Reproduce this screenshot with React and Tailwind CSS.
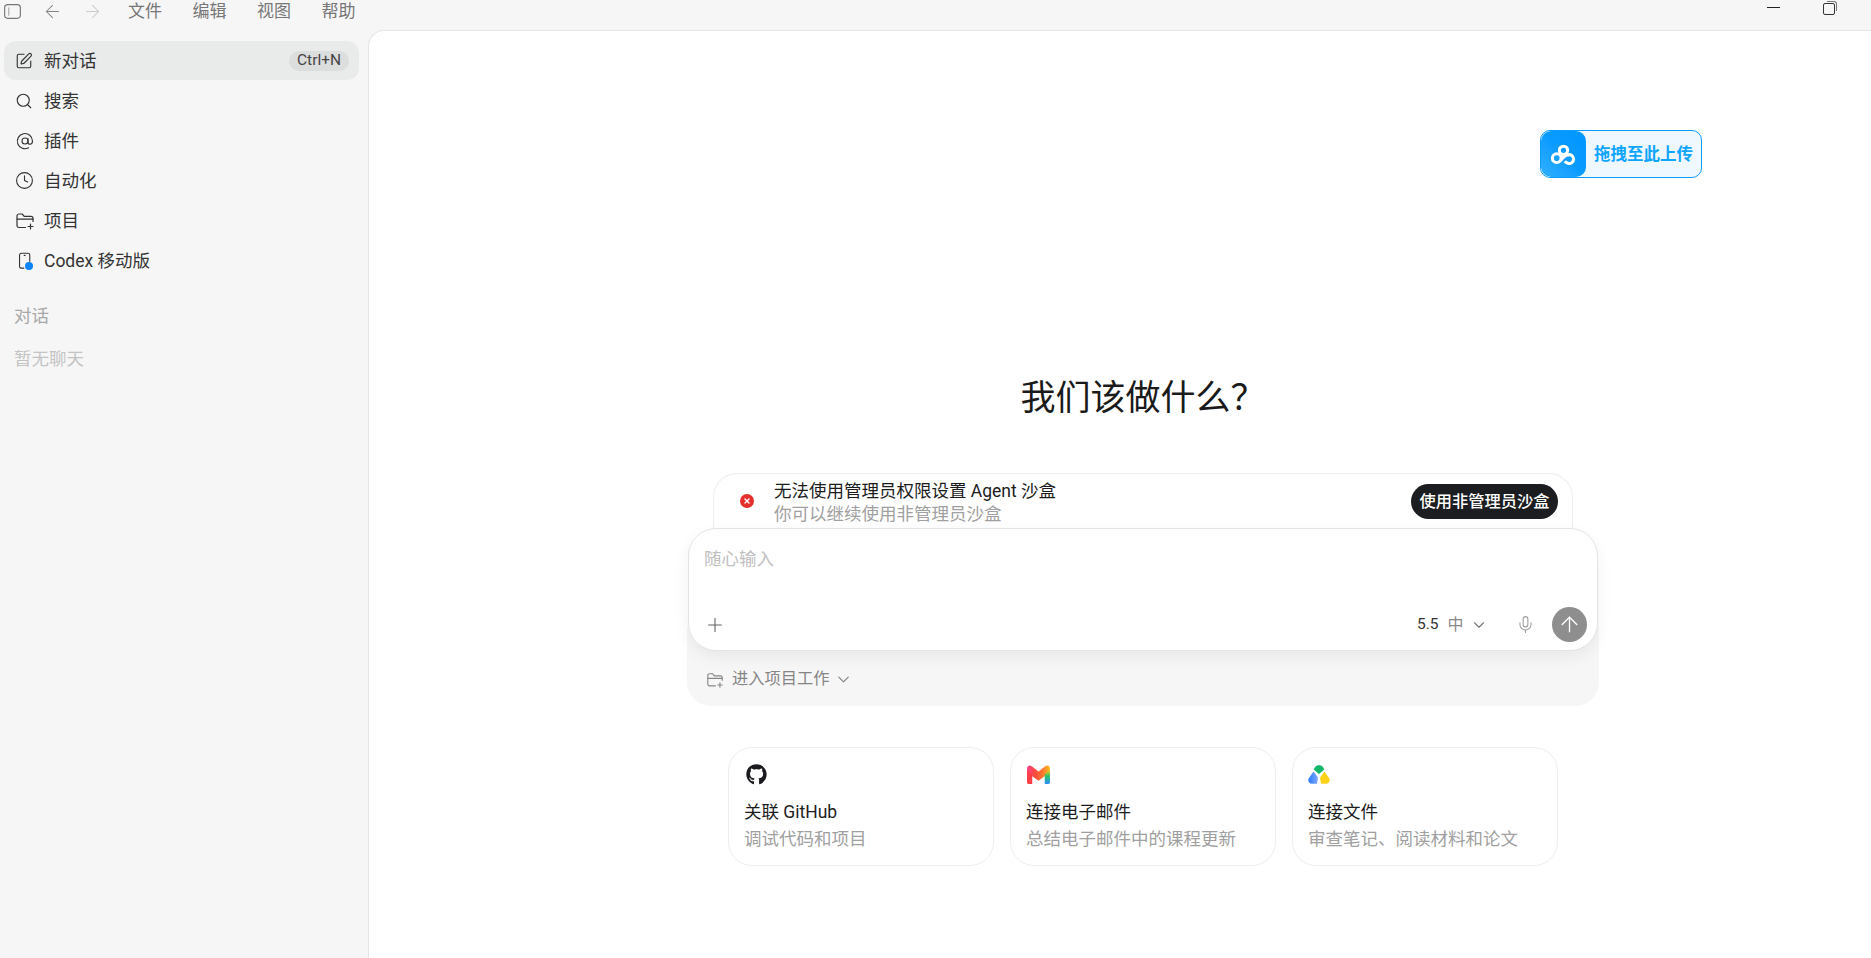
import { ArrowLeft, ArrowRight, ArrowUp, ChevronDown, Clock, Mic, Plus, Search, SquarePen, X } from 'lucide-react';
import { FaGithub } from 'react-icons/fa';

const FolderAdd = ({ className }) => (
  <svg viewBox="0 0 20 20" fill="none" stroke="currentColor" strokeWidth="1.2" strokeLinecap="round" strokeLinejoin="round" className={className}>
    <path d="M10.5 16.5H4a2 2 0 0 1-2-2V5a2 2 0 0 1 2-2h3.2l2 2.4H16a2 2 0 0 1 2 2v3" />
    <path d="M2.2 8.2H18" />
    <path d="M15.5 13v5M13 15.5h5" />
  </svg>
);

const At = ({ className }) => (
  <svg viewBox="0 0 20 20" fill="none" stroke="currentColor" strokeWidth="1.1" strokeLinecap="round" className={className}>
    <circle cx="10" cy="10" r="3" />
    <path d="M13 7.4v3.800c0 1.200.9 2 2 2s2.500-1 2.500-3.200A7.600 7.600 0 1 0 13.600 16.800" />
  </svg>
);

const PhoneDot = ({ className }) => (
  <span className={`relative block ${className}`}>
    <svg viewBox="0 0 20 20" fill="none" stroke="currentColor" strokeWidth="1.3" strokeLinecap="round" className="w-full h-full">
      <path d="M8 19H5a2 2 0 0 1-2-2V3.500a2 2 0 0 1 2-2h8a2 2 0 0 1 2 2V11" />
      <path d="M8.500 4h1" />
    </svg>
    <span className="absolute right-[1px] bottom-[-1px] w-[8px] h-[8px] rounded-full bg-[#0a84ff]" />
  </span>
);

const Gmail = () => (
  <svg viewBox="0 0 24 20" className="w-[25px] h-[21px]">
    <defs>
      <linearGradient id="gm" x1="0" y1="0" x2="1" y2="0">
        <stop offset="0" stopColor="#f2448c" />
        <stop offset="0.35" stopColor="#ff4a3d" />
        <stop offset="0.7" stopColor="#ff7a2e" />
        <stop offset="1" stopColor="#f8c21c" />
      </linearGradient>
      <linearGradient id="gr" x1="0" y1="0" x2="0" y2="1">
        <stop offset="0" stopColor="#f6c71d" />
        <stop offset="0.45" stopColor="#25c06d" />
        <stop offset="1" stopColor="#2b8cff" />
      </linearGradient>
    </defs>
    <path d="M1 4.200C1 1.600 3.600.6 5.500 2L12 7l6.500-5C20.400.6 23 1.600 23 4.200V8l-11 8L1 8z" fill="url(#gm)" />
    <path d="M1 6l5 3.800V19H2.500A1.500 1.500 0 0 1 1 17.500z" fill="#ff3d47" />
    <path d="M23 6l-5 3.800V19h3.500a1.500 1.500 0 0 0 1.500-1.500z" fill="url(#gr)" />
  </svg>
);

const Drive = () => (
  <svg viewBox="0 0 22 20" className="w-[22px] h-[20px]">
    <defs>
      <linearGradient id="db" x1="0" y1="0" x2="1" y2="0">
        <stop offset="0" stopColor="#2b7bff" />
        <stop offset="1" stopColor="#7fa8ff" />
      </linearGradient>
    </defs>
    <path d="M7 3.200C8.400.6 13.600.6 15 3.200l1.300 2.300L11 10 5.700 5.500z" fill="#12b76a" />
    <path d="M5.500 7.500L10 13.500 9 19.700H4C1 19.700-.6 16.800.8 14.200z" fill="url(#db)" />
    <path d="M16.500 7.500L12 13.500l1 6.200h5c3 0 4.600-2.900 3.200-5.500z" fill="#ffd21a" />
  </svg>
);

const NetdiskLogo = () => (
  <svg viewBox="0 0 26 20" fill="none" stroke="#fff" strokeWidth="3" className="w-[27px] h-[21px]">
    <circle cx="13" cy="6" r="4" />
    <circle cx="6.500" cy="13.500" r="4.200" />
    <path d="M10 15.500c2-1 3.500-5 7-5a4.200 4.200 0 1 1 0 7.800c-1.200-.3-2-1-2.800-1.800" />
  </svg>
);

const navItems = [
  { label: '新对话', icon: <SquarePen className="w-[18px] h-[18px] -ml-[1px]" strokeWidth={1.5} />, shortcut: 'Ctrl+N', active: true },
  { label: '搜索', icon: <Search className="w-[18px] h-[18px] -ml-[1px]" strokeWidth={1.5} /> },
  { label: '插件', icon: <At className="w-[20px] h-[20px] -ml-[1px]" /> },
  { label: '自动化', icon: <Clock className="w-[19px] h-[19px] -ml-[1px]" strokeWidth={1.4} /> },
  { label: '项目', icon: <FolderAdd className="w-[20px] h-[20px] -ml-[1px]" /> },
  { label: 'Codex 移动版', icon: <PhoneDot className="w-[17px] h-[17px] ml-[1px]" /> },
];

const cards = [
  { icon: <FaGithub className="w-[21px] h-[21px] text-[#1b1b1f] ml-[2px]" />, title: '关联 GitHub', sub: '调试代码和项目' },
  { icon: <Gmail />, title: '连接电子邮件', sub: '总结电子邮件中的课程更新' },
  { icon: <Drive />, title: '连接文件', sub: '审查笔记、阅读材料和论文' },
];

export default function App() {
  return (
    <div className="h-screen w-full overflow-hidden flex flex-col bg-[#f6f6f6] text-[17.5px] text-[#1c1c1c] font-['Roboto','Noto_Sans_CJK_SC',sans-serif]">
      <header className="h-[30px] shrink-0 flex items-center text-[#777] text-[17px]">
        <svg viewBox="0 0 16 14" fill="none" stroke="#777" strokeWidth="1.100" className="ml-[4px] w-[17px] h-[15px] -mt-[7px]">
          <rect x="0.600" y="0.600" width="14.800" height="12.800" rx="3" />
          <path d="M4.500 3.500v7" strokeLinecap="round" stroke="#aaa" />
        </svg>
        <ArrowLeft className="ml-[21px] w-[21px] h-[21px] -mt-[7px] text-[#888]" strokeWidth={1.2} />
        <ArrowRight className="ml-[19px] w-[21px] h-[21px] -mt-[7px] text-[#ccc]" strokeWidth={1.2} />
        <nav className="ml-[25px] flex gap-[30.5px] -mt-[6px]">
          <span>文件</span>
          <span>编辑</span>
          <span>视图</span>
          <span>帮助</span>
        </nav>
        <span className="ml-auto mb-[16px] w-[13px] h-[1px] bg-[#222]" />
        <span className="ml-[43px] mr-[36px] mb-[13px] relative w-[12px] h-[12px] border border-[#333] rounded-[2px] bg-[#f6f6f6]">
          <span className="absolute -top-[3px] -right-[3px] w-[10px] h-[10px] border-t border-r border-[#777] rounded-tr-[3px]" />
        </span>
      </header>

      <div className="flex-1 flex min-h-0">
        <aside className="w-[368px] shrink-0 pt-[11px] px-[4px] text-[#333]">
          <div className="flex flex-col gap-[1px] w-[355px]">
            {navItems.map((item) => (
              <div key={item.label} className={`h-[39px] flex items-center pl-[12px] pr-[10px] rounded-[12px] ${item.active ? 'bg-[#e9eaea]' : ''}`}>
                <span className="w-[28px] shrink-0 flex">{item.icon}</span>
                <span className="pt-[1px]">{item.label}</span>
                {item.shortcut && (
                  <span className="ml-auto h-[20px] w-[60px] flex items-center justify-center rounded-full bg-[#dcdddd] text-[15.5px] text-[#444]">
                    {item.shortcut}
                  </span>
                )}
              </div>
            ))}
          </div>
          <div className="pl-[10px] mt-[23px] text-[#a8a8a8] leading-[26px]">对话</div>
          <div className="pl-[10px] mt-[17px] text-[#c4c4c4] leading-[26px]">暂无聊天</div>
        </aside>

        <main className="relative flex-1 min-w-0 bg-white rounded-tl-[16px] border-l border-t border-[#e5e5e5] pl-[318px] pt-[344px]">
          <div className="absolute left-[1171px] top-[99px] w-[162px] h-[48px] flex items-center rounded-[10px] border border-[#0a9bff] bg-[#eff8ff] overflow-hidden">
            <span className="w-[45px] h-full shrink-0 flex items-center justify-center rounded-[10px] bg-gradient-to-tr from-[#2fb0ff] via-[#0a9bff] to-[#0096ff]">
              <NetdiskLogo />
            </span>
            <span className="ml-[8px] pt-[2px] text-[16.5px] font-bold text-[#0ea5ff] whitespace-nowrap">拖拽至此上传</span>
          </div>

          <div className="w-[912px] flex flex-col">
            <h1 className="text-center text-[35px] h-[44px] leading-[44px] pt-[2px] text-[#1a1a1a]">我们该做什么？</h1>

            <div className="mt-[54px] ml-[26px] w-[860px] h-[55px] flex items-center rounded-t-[24px] border border-b-0 border-[#eeeeee] pl-[26px] pr-[14px]">
              <span className="w-[14px] h-[14px] shrink-0 rounded-full bg-[#e5302e] flex items-center justify-center">
                <X className="w-[8px] h-[8px] text-white" strokeWidth={4} />
              </span>
              <div className="ml-[20px] pt-[3px] flex flex-col leading-[23px]">
                <span className="text-[#1c1c1c]">无法使用管理员权限设置 Agent 沙盒</span>
                <span className="text-[#a0a0a0]">你可以继续使用非管理员沙盒</span>
              </div>
              <button className="ml-auto h-[35px] w-[147px] pt-[2px] rounded-full bg-[#1c1d20] text-white text-[16.25px] font-medium">使用非管理员沙盒</button>
            </div>

            <div className="relative z-10 mx-[1px] h-[123px] flex flex-col justify-between rounded-[28px] border border-[#e4e4e4] bg-white shadow-[0_6px_16px_rgba(0,0,0,0.06)] pt-[17px] pb-[8px] pl-[15px] pr-[10px]">
              <div className="leading-[26px] text-[#c0c0c0]">随心输入</div>
              <div className="flex items-center">
                <Plus className="w-[22px] h-[22px] text-[#666]" strokeWidth={1.2} />
                <span className="ml-auto text-[15.5px] text-[#333]">5.5</span>
                <span className="ml-[9px] text-[16px] text-[#8a8a8a]">中</span>
                <ChevronDown className="ml-[6px] w-[18px] h-[18px] text-[#777]" strokeWidth={1.5} />
                <Mic className="ml-[28.5px] w-[19px] h-[19px] text-[#a0a0a0]" strokeWidth={1.4} />
                <span className="ml-[17px] w-[35px] h-[35px] rounded-full bg-[#8e8e8e] flex items-center justify-center">
                  <ArrowUp className="w-[25px] h-[25px] text-white" strokeWidth={1.3} />
                </span>
              </div>
            </div>

            <div className="-mt-[24px] h-[79px] pt-[26px] flex items-center rounded-b-[24px] bg-[#f6f6f6] pl-[19px] text-[16.25px] text-[#858585]">
              <FolderAdd className="w-[18px] h-[18px]" />
              <span className="ml-[8px]">进入项目工作</span>
              <ChevronDown className="ml-[4px] w-[19px] h-[19px]" strokeWidth={1.5} />
            </div>

            <div className="mt-[41px] ml-[41px] w-[830px] grid grid-cols-3 gap-[16px]">
              {cards.map((card) => (
                <div key={card.title} className="h-[119px] rounded-[24px] border border-[#eeeeee] pl-[15px] pt-[15px] flex flex-col">
                  <div className="h-[22px] flex items-center">{card.icon}</div>
                  <div className="mt-[14px] leading-[26px] text-[#1c1c1c]">{card.title}</div>
                  <div className="leading-[28px] text-[#a0a0a0]">{card.sub}</div>
                </div>
              ))}
            </div>
          </div>
        </main>
      </div>
    </div>
  );
}
